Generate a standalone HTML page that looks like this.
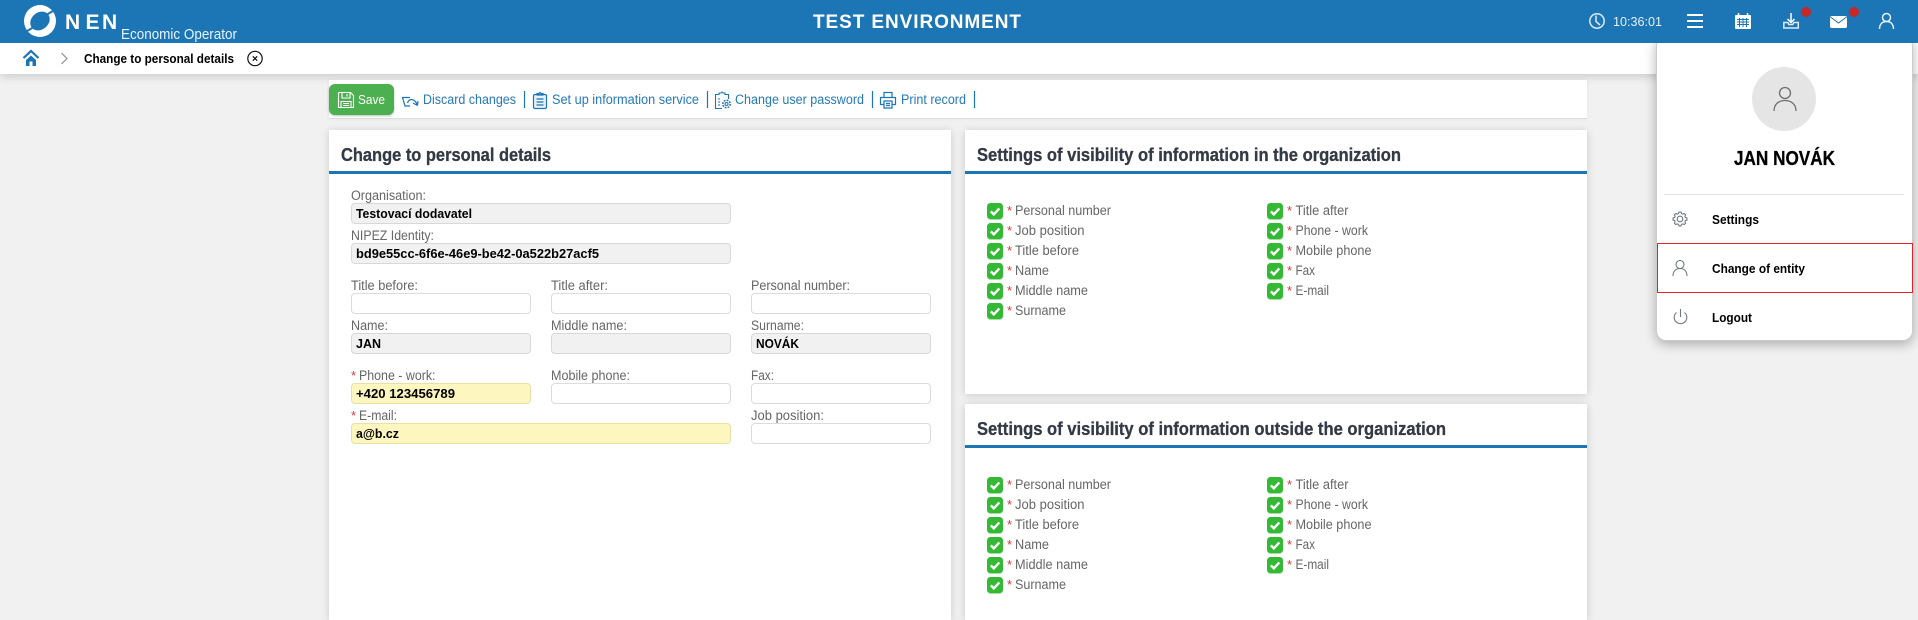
<!DOCTYPE html>
<html lang="en">
<head>
<meta charset="utf-8">
<title>Change to personal details</title>
<style>
html,body{margin:0;padding:0;width:1918px;height:609px;overflow:hidden;background:#f1f1f1;font-family:"Liberation Sans",sans-serif}
.a{position:absolute;box-sizing:border-box}
.card{background:#fff;box-shadow:0 1px 8px rgba(0,0,0,.17)}
.line{background:#1c75b4;height:3px}
.i{position:absolute;box-sizing:border-box;height:21px;border:1px solid #dcdcdc;border-radius:4px;background:#fff}
.g{background:#f1f1f1;border-color:#d8d8d8}
.y{background:#fdf6bf;border-color:#e8e0a8}
svg text{font-family:"Liberation Sans",sans-serif;font-size:13px}
.l{fill:#666;font-size:13.5px!important}
.v{fill:#000;font-weight:bold}
.k{fill:#2679b7;font-size:13.5px!important}
.h{fill:#333a45;stroke:#333a45;stroke-width:.3px;font-size:18px!important;font-weight:bold}
.m{fill:#000;font-weight:bold}
.r{fill:#e0363c}
</style>
</head>
<body>
<div class="a" style="left:0;top:43px;width:1918px;height:31px;background:#fff;box-shadow:0 2px 10px rgba(0,0,0,.18)"></div>

<div class="a" style="left:329px;top:80px;width:1258px;height:39px;background:#fff;border-bottom:1px solid #ddd;box-shadow:0 0 4px rgba(0,0,0,.06)"></div>
<div class="a" style="left:329px;top:84px;width:65px;height:31px;background:#4caf50;border-radius:6px;box-shadow:0 1px 2px rgba(0,0,0,.25)"></div>

<div class="a card" style="left:329px;top:130px;width:622px;height:490px"></div>
<div class="a line" style="left:329px;top:171px;width:622px"></div>
<div class="a card" style="left:965px;top:130px;width:622px;height:264px"></div>
<div class="a line" style="left:965px;top:171px;width:622px"></div>
<div class="a card" style="left:965px;top:404px;width:622px;height:216px"></div>
<div class="a line" style="left:965px;top:445px;width:622px"></div>

<div class="i g" style="left:351px;top:203px;width:380px"></div>
<div class="i g" style="left:351px;top:243px;width:380px"></div>
<div class="i" style="left:351px;top:293px;width:180px"></div>
<div class="i" style="left:551px;top:293px;width:180px"></div>
<div class="i" style="left:751px;top:293px;width:180px"></div>
<div class="i g" style="left:351px;top:333px;width:180px"></div>
<div class="i g" style="left:551px;top:333px;width:180px"></div>
<div class="i g" style="left:751px;top:333px;width:180px"></div>
<div class="i y" style="left:351px;top:383px;width:180px"></div>
<div class="i" style="left:551px;top:383px;width:180px"></div>
<div class="i" style="left:751px;top:383px;width:180px"></div>
<div class="i y" style="left:351px;top:423px;width:380px"></div>
<div class="i" style="left:751px;top:423px;width:180px"></div>

<div class="a" style="left:1656px;top:36px;width:257px;height:305px;background:#fff;border:1px solid #ccc;border-radius:10px;box-shadow:0 3px 12px rgba(0,0,0,.3)"></div>
<div class="a" style="left:1752px;top:67px;width:64px;height:64px;border-radius:50%;background:#e5e5e5"></div>
<div class="a" style="left:1664px;top:194px;width:240px;height:1px;background:#e0e0e0"></div>
<div class="a" style="left:1657px;top:243px;width:256px;height:50px;border:1px solid #e8202a"></div>
<div class="a" style="left:0;top:0;width:1918px;height:43px;background:#1c75b4"></div>

<svg class="a" style="left:0;top:0" width="1918" height="609" viewBox="0 0 1918 609" xmlns="http://www.w3.org/2000/svg">
<defs>
<g id="c"><rect x="0" y="1" width="16" height="16" rx="3.5" fill="#a6dfa6"/><rect width="16" height="16" rx="3.5" fill="#34b934"/><path d="M3.8 8.4l3 3 5.5-6" fill="none" stroke="#fff" stroke-width="2.4"/></g>
</defs>

<!-- logo -->
<circle cx="40" cy="21" r="16" fill="#fff"/>
<ellipse cx="40" cy="21" rx="10.500" ry="8.500" transform="rotate(-40 40 21)" fill="#1c75b4"/>
<path d="M23 33.500L33 27.500M47 14.500L57 8.500" stroke="#1c75b4" stroke-width="2" fill="none"/>
<text x="65 85.500 102" y="29" style="font-size:21px;font-weight:bold" fill="#fff">NEN</text>
<text x="121" y="39" textLength="116" lengthAdjust="spacingAndGlyphs" style="font-size:14.500px" fill="#e8f3fb">Economic Operator</text>
<text x="813" y="28" textLength="208" lengthAdjust="spacing" style="font-size:19px;font-weight:bold" fill="#fff">TEST ENVIRONMENT</text>

<!-- header right -->
<g fill="none" stroke="#dcebf6" stroke-width="1.500">
<circle cx="1597" cy="21" r="7.200"/><path d="M1596 15.500V21.500L1600 25"/>
</g>
<text x="1613" y="26" textLength="49" lengthAdjust="spacingAndGlyphs" fill="#e5f0f8">10:36:01</text>
<path d="M1687 15h16M1687 21h16M1687 27h16" stroke="#fff" stroke-width="2"/>
<g>
<rect x="1735" y="15" width="16" height="14" rx="1" fill="#fff"/>
<path d="M1738.500 13v3M1747.500 13v3" stroke="#fff" stroke-width="1.500"/>
<path d="M1737 19.500h12M1737 22h12M1737 24.500h12M1739.500 18v9M1743 18v9M1746.500 18v9" stroke="#1c75b4" stroke-width="1"/>
</g>
<g fill="none" stroke="#dcebf6" stroke-width="1.500">
<path d="M1791 13v9M1787.500 19l3.500 3.500 3.500-3.500" stroke="#fff"/>
<path d="M1783.800 22.500v5.500h14.500v-5.500h-4.500l-1 2h-4l-1-2z"/>
</g>
<path d="M1830 17.500C1830 16.500 1831 16 1832 16h13c1 0 2 .5 2 1.500v9c0 1-1 1.500-2 1.500h-13c-1 0-2-.5-2-1.500z" fill="#fff"/>
<path d="M1830.500 17l8 6 8-6" fill="none" stroke="#1c75b4" stroke-width="1"/>
<circle cx="1806" cy="12" r="5" fill="#c62828"/>
<circle cx="1854" cy="12" r="5" fill="#c62828"/>
<g fill="none" stroke="#e5f0f8" stroke-width="1.500">
<circle cx="1886.500" cy="17.500" r="4"/><path d="M1879.500 29c0-5 3-7.500 7-7.500s7 2.500 7 7.500"/>
</g>

<!-- breadcrumb -->
<path d="M23.500 58L31 51L38.500 58" fill="none" stroke="#1c75b4" stroke-width="2.200"/>
<path d="M26 60V66H29.500V61.500H32.500V66H36V60L31 55.500z" fill="#1c75b4"/>
<path d="M61.500 53l5.500 5.500-5.500 5.500" fill="none" stroke="#8a8f96" stroke-width="1.200"/>
<text class="m" x="84" y="63" textLength="150" lengthAdjust="spacingAndGlyphs">Change to personal details</text>
<circle cx="255" cy="58.500" r="7.200" fill="none" stroke="#111" stroke-width="1.200"/>
<path d="M252.800 56.300l4.400 4.400M257.200 56.300l-4.400 4.400" stroke="#111" stroke-width="1.200"/>

<!-- toolbar -->
<g fill="none" stroke="#fff" stroke-width="1.100">
<path d="M339 92.500H350.500L353.500 95.500V107.500H338.500V93z"/>
<path d="M342 92.500V98H350V92.500M347 94V96.500M341 107.500V101.500H351V107.500M343 103.500H349M343 105.500H349"/>
</g>
<text x="358" y="104" textLength="27" lengthAdjust="spacingAndGlyphs" fill="#fff">Save</text>
<g fill="none" stroke="#1c75b4" stroke-width="1.200">
<path d="M410 97.500H402.500L405 106H410M407.500 103C409 98.500 414 97.500 417.500 105M417.500 105.500L413 103M417.500 105.500L418 101"/>
</g>
<text class="k" x="423" y="104" textLength="93" lengthAdjust="spacingAndGlyphs">Discard changes</text>
<path d="M524.500 91V108M707.500 91V108M872.500 91V108M974.500 91V108" stroke="#1c75b4" stroke-width="1.200"/>
<g fill="none" stroke="#1c75b4" stroke-width="1.200">
<rect x="533.500" y="94.500" width="13" height="14" rx="1.500" fill="#e8f1f8"/>
<path d="M537 95V93.500H539Q540 91.500 541 93.500H543V95zM536.500 99H543.500M536.500 102H543.500M536.500 105H543.500"/>
</g>
<text class="k" x="552" y="104" textLength="147" lengthAdjust="spacingAndGlyphs">Set up information service</text>
<g fill="none" stroke="#1c75b4" stroke-width="1.100">
<path d="M722 108.500H715.500V94.500H719V93H721Q722 91 723 93H725V94.500H728.500V99"/>
<path d="M718 99h2M718 102h2M718 105h2"/>
<circle cx="726.500" cy="104" r="1.500"/>
<circle cx="726.500" cy="104" r="3.700" stroke-dasharray="1.800 1.100" stroke-width="1.500"/>
</g>
<text class="k" x="735" y="104" textLength="129" lengthAdjust="spacingAndGlyphs">Change user password</text>
<g fill="none" stroke="#1c75b4" stroke-width="1.200">
<path d="M884 97V92.500H892V97M884 104.500H880.500V97.500H895.500V104.500H892"/>
<path d="M884 101H892V108H884zM886 103.500H890M886 105.500H890"/>
</g>
<text class="k" x="901" y="104" textLength="65" lengthAdjust="spacingAndGlyphs">Print record</text>

<!-- headings -->
<text class="h" x="341" y="161" textLength="210" lengthAdjust="spacingAndGlyphs">Change to personal details</text>
<text class="h" x="977" y="161" textLength="424" lengthAdjust="spacingAndGlyphs">Settings of visibility of information in the organization</text>
<text class="h" x="977" y="435" textLength="469" lengthAdjust="spacingAndGlyphs">Settings of visibility of information outside the organization</text>

<!-- form -->
<text class="l" x="351" y="200" textLength="75" lengthAdjust="spacingAndGlyphs">Organisation:</text>
<text class="v" x="356" y="218" textLength="116" lengthAdjust="spacingAndGlyphs">Testovací dodavatel</text>
<text class="l" x="351" y="240" textLength="83" lengthAdjust="spacingAndGlyphs">NIPEZ Identity:</text>
<text class="v" x="356" y="258" textLength="243" lengthAdjust="spacingAndGlyphs">bd9e55cc-6f6e-46e9-be42-0a522b27acf5</text>
<text class="l" x="351" y="290" textLength="67" lengthAdjust="spacingAndGlyphs">Title before:</text>
<text class="l" x="551" y="290" textLength="57" lengthAdjust="spacingAndGlyphs">Title after:</text>
<text class="l" x="751" y="290" textLength="99" lengthAdjust="spacingAndGlyphs">Personal number:</text>
<text class="l" x="351" y="330" textLength="37" lengthAdjust="spacingAndGlyphs">Name:</text>
<text class="l" x="551" y="330" textLength="76" lengthAdjust="spacingAndGlyphs">Middle name:</text>
<text class="l" x="751" y="330" textLength="53" lengthAdjust="spacingAndGlyphs">Surname:</text>
<text class="v" x="356" y="348" textLength="25" lengthAdjust="spacingAndGlyphs">JAN</text>
<text class="v" x="756" y="348" textLength="43" lengthAdjust="spacingAndGlyphs">NOVÁK</text>
<text class="r" x="351" y="380">*</text>
<text class="l" x="359" y="380" textLength="76.500" lengthAdjust="spacingAndGlyphs">Phone - work:</text>
<text class="l" x="551" y="380" textLength="79" lengthAdjust="spacingAndGlyphs">Mobile phone:</text>
<text class="l" x="751" y="380" textLength="23" lengthAdjust="spacingAndGlyphs">Fax:</text>
<text class="v" x="356" y="398" textLength="99" lengthAdjust="spacingAndGlyphs">+420 123456789</text>
<text class="r" x="351" y="420">*</text>
<text class="l" x="359" y="420" textLength="38" lengthAdjust="spacingAndGlyphs">E-mail:</text>
<text class="l" x="751" y="420" textLength="73" lengthAdjust="spacingAndGlyphs">Job position:</text>
<text class="v" x="356" y="438" textLength="43" lengthAdjust="spacingAndGlyphs">a@b.cz</text>

<!-- checkbox group 1 -->
<use href="#c" x="987" y="203"/><use href="#c" x="987" y="223"/><use href="#c" x="987" y="243"/><use href="#c" x="987" y="263"/><use href="#c" x="987" y="283"/><use href="#c" x="987" y="303"/>
<use href="#c" x="1267" y="203"/><use href="#c" x="1267" y="223"/><use href="#c" x="1267" y="243"/><use href="#c" x="1267" y="263"/><use href="#c" x="1267" y="283"/>
<text class="r" x="1007" y="215">*</text><text class="l" x="1015" y="215" textLength="96" lengthAdjust="spacingAndGlyphs">Personal number</text>
<text class="r" x="1007" y="235">*</text><text class="l" x="1015" y="235" textLength="69.500" lengthAdjust="spacingAndGlyphs">Job position</text>
<text class="r" x="1007" y="255">*</text><text class="l" x="1015" y="255" textLength="64" lengthAdjust="spacingAndGlyphs">Title before</text>
<text class="r" x="1007" y="275">*</text><text class="l" x="1015" y="275" textLength="34" lengthAdjust="spacingAndGlyphs">Name</text>
<text class="r" x="1007" y="295">*</text><text class="l" x="1015" y="295" textLength="73" lengthAdjust="spacingAndGlyphs">Middle name</text>
<text class="r" x="1007" y="315">*</text><text class="l" x="1015" y="315" textLength="51" lengthAdjust="spacingAndGlyphs">Surname</text>
<text class="r" x="1287" y="215">*</text><text class="l" x="1295.500" y="215" textLength="53" lengthAdjust="spacingAndGlyphs">Title after</text>
<text class="r" x="1287" y="235">*</text><text class="l" x="1295.500" y="235" textLength="72.500" lengthAdjust="spacingAndGlyphs">Phone - work</text>
<text class="r" x="1287" y="255">*</text><text class="l" x="1295.500" y="255" textLength="76" lengthAdjust="spacingAndGlyphs">Mobile phone</text>
<text class="r" x="1287" y="275">*</text><text class="l" x="1295.500" y="275" textLength="19.500" lengthAdjust="spacingAndGlyphs">Fax</text>
<text class="r" x="1287" y="295">*</text><text class="l" x="1295.500" y="295" textLength="33.500" lengthAdjust="spacingAndGlyphs">E-mail</text>

<!-- checkbox group 2 -->
<use href="#c" x="987" y="477"/><use href="#c" x="987" y="497"/><use href="#c" x="987" y="517"/><use href="#c" x="987" y="537"/><use href="#c" x="987" y="557"/><use href="#c" x="987" y="577"/>
<use href="#c" x="1267" y="477"/><use href="#c" x="1267" y="497"/><use href="#c" x="1267" y="517"/><use href="#c" x="1267" y="537"/><use href="#c" x="1267" y="557"/>
<text class="r" x="1007" y="489">*</text><text class="l" x="1015" y="489" textLength="96" lengthAdjust="spacingAndGlyphs">Personal number</text>
<text class="r" x="1007" y="509">*</text><text class="l" x="1015" y="509" textLength="69.500" lengthAdjust="spacingAndGlyphs">Job position</text>
<text class="r" x="1007" y="529">*</text><text class="l" x="1015" y="529" textLength="64" lengthAdjust="spacingAndGlyphs">Title before</text>
<text class="r" x="1007" y="549">*</text><text class="l" x="1015" y="549" textLength="34" lengthAdjust="spacingAndGlyphs">Name</text>
<text class="r" x="1007" y="569">*</text><text class="l" x="1015" y="569" textLength="73" lengthAdjust="spacingAndGlyphs">Middle name</text>
<text class="r" x="1007" y="589">*</text><text class="l" x="1015" y="589" textLength="51" lengthAdjust="spacingAndGlyphs">Surname</text>
<text class="r" x="1287" y="489">*</text><text class="l" x="1295.500" y="489" textLength="53" lengthAdjust="spacingAndGlyphs">Title after</text>
<text class="r" x="1287" y="509">*</text><text class="l" x="1295.500" y="509" textLength="72.500" lengthAdjust="spacingAndGlyphs">Phone - work</text>
<text class="r" x="1287" y="529">*</text><text class="l" x="1295.500" y="529" textLength="76" lengthAdjust="spacingAndGlyphs">Mobile phone</text>
<text class="r" x="1287" y="549">*</text><text class="l" x="1295.500" y="549" textLength="19.500" lengthAdjust="spacingAndGlyphs">Fax</text>
<text class="r" x="1287" y="569">*</text><text class="l" x="1295.500" y="569" textLength="33.500" lengthAdjust="spacingAndGlyphs">E-mail</text>

<!-- dropdown -->
<g fill="none" stroke="#6e6e6e" stroke-width="1.300">
<circle cx="1785" cy="93" r="5.500"/><path d="M1774 111c0-7 5-10.500 11-10.500s11 3.500 11 10.500"/>
</g>
<text x="1734" y="165" textLength="101" lengthAdjust="spacingAndGlyphs" style="font-size:20px;font-weight:bold;stroke:#000;stroke-width:.3px" fill="#000">JAN NOVÁK</text>
<g fill="none" stroke="#6e7680">
<path stroke-width="1.500" d="M1678.500 211.500h3l.6 2.200 1.800.8 2-1.100 2.100 2.100-1.100 2 .8 1.800 2.200.6v3l-2.200.6-.8 1.800 1.100 2-2.100 2.100-2-1.100-1.800.8-.6 2.200h-3l-.6-2.200-1.800-.8-2 1.100-2.100-2.100 1.100-2-.8-1.800-2.200-.6v-3l2.200-.6.8-1.800-1.100-2 2.100-2.100 2 1.100 1.800-.8z" transform="translate(1680 219) scale(.7) translate(-1680 -221.400)"/>
<circle cx="1680" cy="219" r="2.800" stroke-width="1.100"/>
</g>
<text class="m" x="1712" y="224" textLength="47" lengthAdjust="spacingAndGlyphs">Settings</text>
<g fill="none" stroke="#6e7680" stroke-width="1.100">
<circle cx="1680" cy="264.500" r="4"/><path d="M1673 276c0-5 3-7.500 7-7.500s7 2.500 7 7.500"/>
</g>
<text class="m" x="1712" y="273" textLength="93" lengthAdjust="spacingAndGlyphs">Change of entity</text>
<g fill="none" stroke="#6e7680" stroke-width="1.100">
<path d="M1680.500 309V317M1676.500 312.500a6.300 6.300 0 1 0 8 0"/>
</g>
<text class="m" x="1712" y="322" textLength="40" lengthAdjust="spacingAndGlyphs">Logout</text>
</svg>
</body>
</html>
